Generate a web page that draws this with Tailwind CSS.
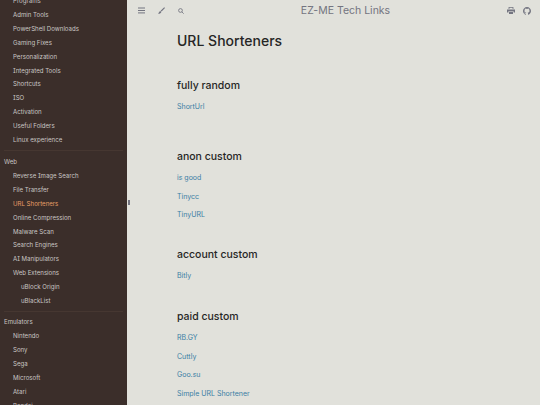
<!DOCTYPE html>
<html lang="en">
<head>
    <meta charset="UTF-8">
    <title>URL Shorteners - EZ-ME Tech Links</title>
    <script src="https://cdn.jsdelivr.net/npm/@tailwindcss/browser@4"></script>
</head>
<body class="h-[405px] w-[540px] overflow-hidden bg-[#e1e1db] font-['Inter',sans-serif] [font-feature-settings:'cv08'] flex">

    <!-- Sidebar -->
    <nav class="relative w-[127px] h-[405px] shrink-0 overflow-hidden bg-[#3b2e2a] text-[#c9c6c4] text-[6.1px] leading-[13.9px]">
        <ol class="-mt-[6px] pl-[4px] pr-[4px]">
            <li class="pl-[9px]">Programs</li>
            <li class="pl-[9px]">Admin Tools</li>
            <li class="pl-[9px]">PowerShell Downloads</li>
            <li class="pl-[9px]">Gaming Fixes</li>
            <li class="pl-[9px]">Personalization</li>
            <li class="pl-[9px]">Integrated Tools</li>
            <li class="pl-[9px]">Shortcuts</li>
            <li class="pl-[9px]">ISO</li>
            <li class="pl-[9px]">Activation</li>
            <li class="pl-[9px]">Useful Folders</li>
            <li class="pl-[9px]">Linux experience</li>
            <li class="h-[1px] my-[3.5px] bg-[#463731]"></li>
            <li>Web</li>
            <li class="pl-[9px]">Reverse Image Search</li>
            <li class="pl-[9px]">File Transfer</li>
            <li class="pl-[9px] text-[#e69f67]">URL Shorteners</li>
            <li class="pl-[9px]">Online Compression</li>
            <li class="pl-[9px]">Malware Scan</li>
            <li class="pl-[9px]">Search Engines</li>
            <li class="pl-[9px]">AI Manipulators</li>
            <li class="pl-[9px]">Web Extensions</li>
            <li class="pl-[17px]">uBlock Origin</li>
            <li class="pl-[17px]">uBlackList</li>
            <li class="h-[1px] mt-[3px] mb-[3.3px] bg-[#463731]"></li>
            <li>Emulators</li>
            <li class="pl-[9px]">Nintendo</li>
            <li class="pl-[9px]">Sony</li>
            <li class="pl-[9px]">Sega</li>
            <li class="pl-[9px]">Microsoft</li>
            <li class="pl-[9px]">Atari</li>
            <li class="pl-[9px]">Bandai</li>
        </ol>
    </nav>
    <!-- sidebar resize handle -->
    <div class="absolute left-[128px] top-[200px] w-[2px] h-[5px] bg-[#737480]"></div>

    <!-- Page -->
    <div class="flex-1 min-w-0">
        <header class="h-[21px] flex items-center justify-between pl-[11px] pr-[9px] text-[#737480]">
            <div class="flex items-center gap-[13px]">
                <svg class="w-[7px] h-[7px]" viewBox="0 0 7 7" fill="currentColor"><rect y="0.5" width="7" height="1"/><rect y="3" width="7" height="1"/><rect y="5.4" width="7" height="1"/></svg>
                <svg class="w-[7px] h-[7px]" viewBox="0 0 7 7" fill="currentColor"><path d="M6.2 0.2 7 0.9 3.6 4.6 2.6 3.7Z"/><path d="M2.3 4 3.3 4.9C3.1 6.2 1.5 6.8 0 6.6 0.9 6.1 1.1 4.4 2.3 4Z"/></svg>
                <svg class="w-[6px] h-[6px]" viewBox="0 0 7 7" fill="none" stroke="currentColor" stroke-width="1"><circle cx="2.9" cy="2.9" r="2.2"/><path d="M4.5 4.5 6.6 6.6"/></svg>
            </div>
            <h1 class="text-[10.5px] font-normal mt-[1px]">EZ-ME Tech Links</h1>
            <div class="flex items-center gap-[8px]">
                <svg class="w-[8px] h-[7px]" viewBox="0 0 8 7" fill="currentColor"><path d="M1.6 0H6.4V2H5.6V.8H2.4V2H1.6Z"/><path d="M0 2.4H8V5.4H6.6V4.2H1.4V5.4H0Z"/><rect x="2" y="4.8" width="4" height="2.2"/></svg>
                <svg class="w-[8px] h-[8px]" viewBox="0 0 16 16" fill="currentColor"><path d="M8 0C3.6 0 0 3.6 0 8c0 3.5 2.3 6.5 5.5 7.6.4.1.5-.2.5-.4v-1.4c-2.2.5-2.7-1.1-2.7-1.1-.4-.9-.9-1.2-.9-1.2-.7-.5.1-.5.1-.5.8.1 1.2.8 1.2.8.7 1.2 1.9.9 2.3.7.1-.5.3-.9.5-1.1-1.8-.2-3.6-.9-3.6-4 0-.9.3-1.6.8-2.1-.1-.2-.4-1 .1-2.1 0 0 .7-.2 2.2.8.6-.2 1.3-.3 2-.3s1.4.1 2 .3c1.5-1 2.2-.8 2.2-.8.4 1.1.2 1.9.1 2.1.5.6.8 1.3.8 2.1 0 3.1-1.9 3.7-3.7 3.9.3.3.6.8.6 1.5v2.2c0 .2.1.5.6.4C13.7 14.5 16 11.5 16 8c0-4.4-3.6-8-8-8Z"/></svg>
            </div>
        </header>

        <main class="pl-[50px] text-[#262625] -mt-[1px]">
            <h1 class="text-[14px] font-medium leading-[20px] mt-[11px]">URL Shorteners</h1>
            <h2 class="text-[10.5px] font-medium leading-[15px] mt-[27px]">fully random</h2>
            <ul class="text-[7px] leading-[9px] text-[#3a7ea4] mt-[9px] flex flex-col gap-[9.6px]">
                <li>ShortUrl</li>
            </ul>
            <h2 class="text-[10.5px] font-medium leading-[15px] mt-[38px]">anon custom</h2>
            <ul class="text-[7px] leading-[9px] text-[#3a7ea4] mt-[9px] flex flex-col gap-[9.6px]">
                <li>is good</li>
                <li>Tinycc</li>
                <li>TinyURL</li>
            </ul>
            <h2 class="text-[10.5px] font-medium leading-[15px] mt-[28px]">account custom</h2>
            <ul class="text-[7px] leading-[9px] text-[#3a7ea4] mt-[9px] flex flex-col gap-[9.6px]">
                <li>Bitly</li>
            </ul>
            <h2 class="text-[10.5px] font-medium leading-[15px] mt-[29px]">paid custom</h2>
            <ul class="text-[7px] leading-[9px] text-[#3a7ea4] mt-[9px] flex flex-col gap-[9.6px]">
                <li>RB.GY</li>
                <li>Cuttly</li>
                <li>Goo.su</li>
                <li>Simple URL Shortener</li>
            </ul>
        </main>
    </div>
</body>
</html>
